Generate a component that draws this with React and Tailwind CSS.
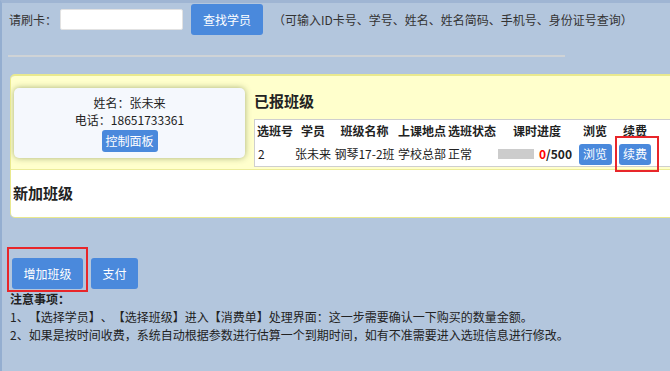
import React from "react";

const font = { fontFamily: '"Noto Sans CJK SC", "Microsoft YaHei", sans-serif' };

function BlueButton({ children, className = "" }) {
  return (
    <button className={`bg-[#4a89dc] text-white rounded-[3px] text-[12px] leading-none flex items-center justify-center ${className}`}>
      {children}
    </button>
  );
}

export default function App() {
  return (
    <div
      style={font}
      className="w-[670px] h-[371px] overflow-hidden bg-[#b3c6dd] border-t-[3px] border-t-[#9fb5d3] border-l-2 border-l-[#94aed0] text-[#333] text-[12px] [text-spacing-trim:space-all]"
    >
      {/* ===== search row ===== */}
      <div className="flex items-center pl-[7px] pt-[1px] h-[32px]">
        <span className="w-[51px] text-[12px] text-[#333]">请刷卡：</span>
        <input className="w-[123px] h-[21px] bg-white rounded-[2px] border border-[#e2e2e2] outline-none" />
        <BlueButton className="ml-[8px] w-[72px] h-[31px]">查找学员</BlueButton>
        <span className="ml-[10px] text-[#333]">（可输入ID卡号、学号、姓名、姓名简码、手机号、身份证号查询）</span>
      </div>

      <div className="mt-[20px] ml-[6px] w-[557px] h-[2px] bg-[#cfd3d6]"></div>

      {/* ===== main panel ===== */}
      <div className="mt-[17px] ml-[8px] w-[690px] border border-[#e9e98e] border-t-2 rounded-[5px] overflow-hidden">
        <div className="h-[94px] bg-[#ffffcc] border-b border-[#ecec9a] flex pl-[3px]">
          {/* student card */}
          <div className="mt-[12px] w-[231px] h-[70px] bg-[#f5f8fd] rounded-[5px] shadow-[0_0_6px_rgba(60,80,20,0.45)] flex flex-col items-center pt-[6px]">
            <div className="leading-[17px] text-[#222]">姓名：张未来</div>
            <div className="leading-[17px] text-[#222]">电话：18651733361</div>
            <BlueButton className="mt-[2px] w-[56px] h-[22px]">控制面板</BlueButton>
          </div>

          {/* enrolled classes */}
          <div className="ml-[9px] flex-1 flex flex-col">
            <div className="mt-[14px] h-[22px] leading-[22px] text-[15px] font-bold text-[#222]">已报班级</div>
            <div className="mt-[7px] bg-white border border-[#cfcfcf] flex flex-col text-[#222]">
              <div className="flex h-[22px] items-center font-bold">
                <div className="w-[39px] pl-[2px]">选班号</div>
                <div className="w-[38px] text-center">学员</div>
                <div className="w-[65px] text-center">班级名称</div>
                <div className="w-[50px] text-center">上课地点</div>
                <div className="w-[50px] pl-[1px]">选班状态</div>
                <div className="w-[80px] text-center">课时进度</div>
                <div className="w-[36px] text-center">浏览</div>
                <div className="w-[44px] text-center">续费</div>
              </div>
              <div className="flex h-[24px] items-center">
                <div className="w-[39px] pl-[3px]">2</div>
                <div className="w-[38px] text-center">张未来</div>
                <div className="w-[65px] text-center">钢琴17-2班</div>
                <div className="w-[50px] text-center">学校总部</div>
                <div className="w-[50px] pl-[1px]">正常</div>
                <div className="w-[80px] flex items-center">
                  <div className="ml-[1px] w-[36px] h-[10px] bg-[#cccccc]"></div>
                  <span className="ml-[5px] font-bold">
                    <span className="text-[#ff0000]">0</span>/500
                  </span>
                </div>
                <div className="w-[36px] flex justify-center">
                  <BlueButton className="w-[33px] h-[21px]">浏览</BlueButton>
                </div>
                <div className="w-[44px] flex justify-center">
                  <div className="relative">
                    <BlueButton className="w-[32px] h-[21px]">续费</BlueButton>
                    <div className="absolute left-[-4px] top-[-8px] w-[44px] h-[36px] border-2 border-[#e8262a]"></div>
                  </div>
                </div>
              </div>
            </div>
          </div>
        </div>

        <div className="h-[47px] bg-white flex items-center pl-[2px] text-[15px] font-bold text-[#222]">
          新加班级
        </div>
      </div>

      {/* ===== action buttons ===== */}
      <div className="mt-[40px] ml-[10px] flex">
        <div className="relative">
          <BlueButton className="w-[71px] h-[31px]">增加班级</BlueButton>
          <div className="absolute left-[-5px] top-[-11px] w-[81px] h-[45px] border-2 border-[#e8262a]"></div>
        </div>
        <BlueButton className="ml-[8px] w-[47px] h-[31px]">支付</BlueButton>
      </div>

      {/* ===== notes ===== */}
      <div className="pl-[8px] mt-[1px] leading-[18px] text-[#222]">
        <div className="font-bold">注意事项：</div>
        <div>1、【选择学员】、【选择班级】进入【消费单】处理界面：这一步需要确认一下购买的数量金额。</div>
        <div>2、如果是按时间收费，系统自动根据参数进行估算一个到期时间，如有不准需要进入选班信息进行修改。</div>
      </div>
    </div>
  );
}
